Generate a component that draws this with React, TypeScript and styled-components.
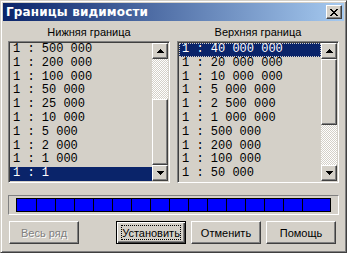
import React from "react";
import styled, { createGlobalStyle, css } from "styled-components";

const Global = createGlobalStyle`
  html, body { margin: 0; padding: 0; background: #d4d0c8; }
  body { font-family: "Liberation Sans", Arial, sans-serif; }
  * { box-sizing: border-box; }
`;

const Window = styled.div`
  width: 347px;
  height: 253px;
  background: #d4d0c8;
  border: 1px solid;
  border-color: #d4d0c8 #404040 #404040 #d4d0c8;
  box-shadow: inset 1px 1px #ffffff, inset -1px -1px #808080;
  padding: 2px;
  display: flex;
  flex-direction: column;
`;

const TitleBar = styled.div`
  height: 18px;
  background: linear-gradient(to right, #0a246a, #a6caf0);
  display: flex;
  align-items: center;
  padding: 0 2px 0 3px;
`;

const TitleText = styled.div`
  flex: 1;
  color: #ffffff;
  font-family: "DejaVu Sans", Verdana, sans-serif;
  font-weight: bold;
  font-size: 12px;
  letter-spacing: 0.15px;
  white-space: nowrap;
`;

const raised = css`
  background: #d4d0c8;
  border: 1px solid;
  border-color: #ffffff #404040 #404040 #ffffff;
  box-shadow: inset -1px -1px #808080, inset 1px 1px #d4d0c8;
`;

const CloseButton = styled.div`
  ${raised};
  width: 16px;
  height: 14px;
  display: flex;
  align-items: center;
  justify-content: center;
`;

const Body = styled.div`
  flex: 1;
  display: flex;
  flex-direction: column;
  padding: 0 5px 0 5px;
`;

const Columns = styled.div`
  display: grid;
  grid-template-columns: 162px 162px;
  column-gap: 7px;
`;

const Column = styled.div`
  display: flex;
  flex-direction: column;
`;

const Label = styled.div`
  height: 20px;
  display: flex;
  align-items: center;
  justify-content: center;
  font-size: 11px;
  color: #000;
  padding-top: 1px;
`;

const ListBox = styled.div`
  height: 142px;
  border: 1px solid;
  border-color: #808080 #ffffff #ffffff #808080;
  box-shadow: inset 1px 1px #404040, inset -1px -1px #d4d0c8;
  padding: 1px;
  display: flex;
`;

const Items = styled.div`
  flex: 1;
  overflow: hidden;
`;

const Row = styled.div<{ $selected?: boolean; $focused?: boolean }>`
  height: 13.8px;
  line-height: 13px;
  padding-left: 3px;
  font-family: "Liberation Mono", "Courier New", monospace;
  font-size: 12px;
  white-space: pre;
  color: ${(p) => (p.$selected ? "#ffffff" : "#000000")};
  background: ${(p) => (p.$selected ? "#0a246a" : "transparent")};
  ${(p) =>
    p.$focused &&
    css`
      outline: 1px dotted #d4d0c8;
      outline-offset: -1px;
    `}
`;

const ScrollBar = styled.div`
  width: 16px;
  display: flex;
  flex-direction: column;
`;

const ArrowButton = styled.div`
  ${raised};
  width: 16px;
  height: 16px;
  display: flex;
  align-items: center;
  justify-content: center;
`;

const Track = styled.div<{ $at: "top" | "bottom" }>`
  flex: 1;
  display: flex;
  flex-direction: column;
  justify-content: ${(p) => (p.$at === "top" ? "flex-start" : "flex-end")};
  background-color: #d4d0c8;
  background-image: conic-gradient(#ffffff 25%, #d4d0c8 0 50%, #ffffff 0 75%, #d4d0c8 0);
  background-size: 2px 2px;
`;

const Thumb = styled.div`
  ${raised};
  height: 66px;
`;

const RangeFrame = styled.div`
  margin-top: 12px;
  height: 20px;
  border: 1px solid;
  border-color: #808080 #ffffff #ffffff #808080;
  padding: 2px 7px 2px 7px;
  display: flex;
`;

const RangeBar = styled.div`
  flex: 1;
  display: flex;
  border: 1px solid #000000;
  background: #0000ff;
`;

const Segment = styled.div<{ $wide: boolean }>`
  flex: none;
  width: ${(p) => (p.$wide ? 19 : 18)}px;
  background: #0000ff;
  & + & {
    width: ${(p) => (p.$wide ? 20 : 19)}px;
    border-left: 1px solid #000000;
  }
`;

const ButtonRow = styled.div`
  margin-top: 6px;
  display: flex;
  gap: 5px;
  padding: 0 3px 0 1px;
`;

const Spacer = styled.div`
  flex: 1;
`;

const Button = styled.div<{ $disabled?: boolean; $default?: boolean }>`
  width: 70px;
  height: 23px;
  ${raised};
  display: flex;
  align-items: center;
  justify-content: center;
  font-size: 11px;
  color: ${(p) => (p.$disabled ? "#808080" : "#000000")};
  text-shadow: ${(p) => (p.$disabled ? "1px 1px #ffffff" : "none")};
  ${(p) =>
    p.$default &&
    css`
      border: 1px solid #000000;
      box-shadow: inset 1px 1px #ffffff, inset -1px -1px #404040, inset -2px -2px #808080;
    `}
`;

const FocusText = styled.span`
  border: 1px dotted #000000;
  padding: 1px 0 0 0;
  line-height: 12px;
`;

const UpArrow = () => (
  <svg width="7" height="4" viewBox="0 0 7 4">
    <path d="M3 0h1v1h1v1h1v1h1v1H0V3h1V2h1V1h1z" fill="#000" />
  </svg>
);

const DownArrow = () => (
  <svg width="7" height="4" viewBox="0 0 7 4">
    <path d="M0 0h7v1H6v1H5v1H4v1H3V3H2V2H1V1H0z" fill="#000" />
  </svg>
);

const CloseIcon = () => (
  <svg width="8" height="7" viewBox="0 0 8 7">
    <path
      d="M0 0h2v1h1v1h2V1h1V0h2v1H7v1H6v1H5v1h1v1h1v1h1v1H6V6H5V5H3v1H2v1H0V6h1V5h1V4h1V3H2V2H1V1H0z"
      fill="#000"
    />
  </svg>
);

const lower = ["500 000", "200 000", "100 000", "50 000", "25 000", "10 000", "5 000", "2 000", "1 000", "1"];
const upper = [
  "40 000 000",
  "20 000 000",
  "10 000 000",
  "5 000 000",
  "2 500 000",
  "1 000 000",
  "500 000",
  "200 000",
  "100 000",
  "50 000",
];

function List({
  items,
  selected,
  focused,
  thumbAt,
}: {
  items: string[];
  selected: number;
  focused?: boolean;
  thumbAt: "top" | "bottom";
}) {
  return (
    <ListBox>
      <Items>
        {items.map((v, i) => (
          <Row key={v} $selected={i === selected} $focused={focused && i === selected}>
            {"1 : " + v}
          </Row>
        ))}
      </Items>
      <ScrollBar>
        <ArrowButton>
          <UpArrow />
        </ArrowButton>
        <Track $at={thumbAt}>
          <Thumb />
        </Track>
        <ArrowButton>
          <DownArrow />
        </ArrowButton>
      </ScrollBar>
    </ListBox>
  );
}

export default function App() {
  return (
    <>
      <Global />
      <Window>
        <TitleBar>
          <TitleText>Границы видимости</TitleText>
          <CloseButton>
            <CloseIcon />
          </CloseButton>
        </TitleBar>
        <Body>
          <Columns>
            <Column>
              <Label>Нижняя граница</Label>
              <List items={lower} selected={9} thumbAt="bottom" />
            </Column>
            <Column>
              <Label>Верхняя граница</Label>
              <List items={upper} selected={0} focused thumbAt="top" />
            </Column>
          </Columns>
          <RangeFrame>
            <RangeBar>
              {Array.from({ length: 16 }).map((_, i) => (
                <Segment key={i} $wide={(i * 10) % 16 < 10} />
              ))}
            </RangeBar>
          </RangeFrame>
          <ButtonRow>
            <Button $disabled>Весь ряд</Button>
            <Spacer />
            <Button $default>
              <FocusText>Установить</FocusText>
            </Button>
            <Button>Отменить</Button>
            <Button>Помощь</Button>
          </ButtonRow>
        </Body>
      </Window>
    </>
  );
}
